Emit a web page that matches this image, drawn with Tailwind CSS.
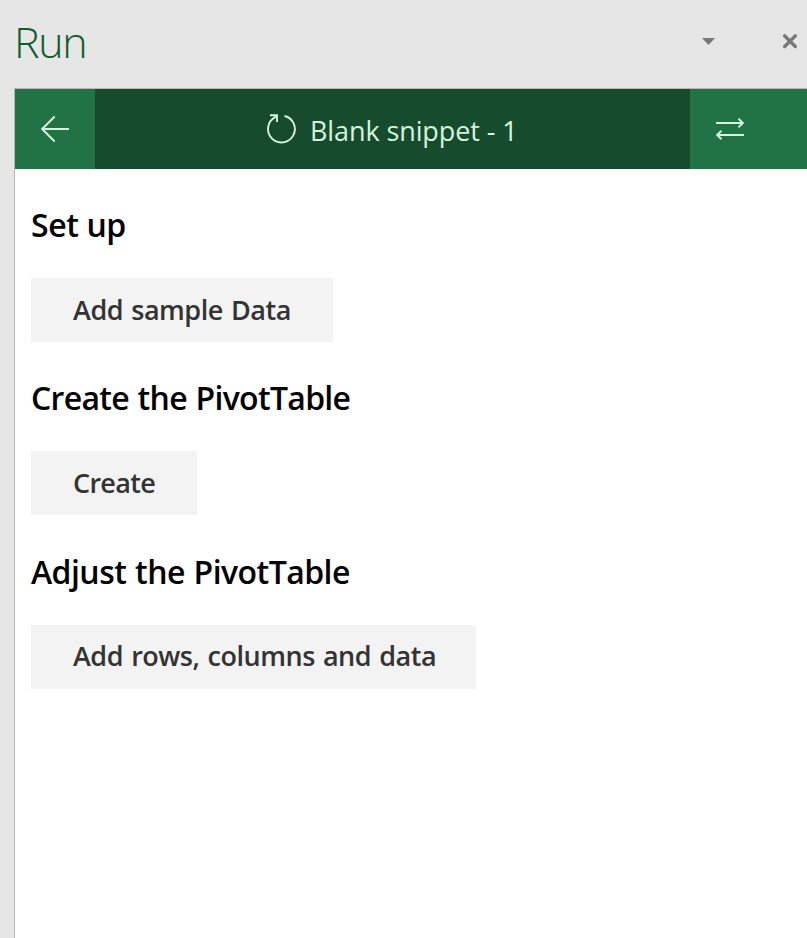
<!DOCTYPE html>
<html lang="en">
<head>
<meta charset="utf-8">
<title>Run</title>
<script src="https://cdn.jsdelivr.net/npm/@tailwindcss/browser@4"></script>
</head>
<body class="h-[938px] w-[807px] overflow-hidden bg-[#e6e6e6] font-['Open_Sans','Noto_Sans',sans-serif]">
<div class="flex h-full flex-col">
  <header class="flex h-[88px] shrink-0 items-start justify-between pl-[14px]">
    <h1 class="pt-[12px] text-[43px] leading-[60px] font-light tracking-[-1.3px] text-[#0e5c2f]">Run</h1>
    <div class="flex pt-[34px] pr-[10px]">
      <svg class="mr-[68px] h-[15px] w-[13px]" viewBox="0 0 13 15" fill="#777"><path d="M0 4H13L6.500 11Z"/></svg>
      <svg class="h-[15px] w-[14px]" viewBox="0 0 14 15" fill="none" stroke="#777" stroke-width="3.400" stroke-linecap="round"><path d="M1.700 1.900L12.300 12.500M12.300 1.900L1.700 12.500"/></svg>
    </div>
  </header>
  <main class="ml-[14px] flex-1 border-t border-l border-[#b7b7b7] bg-white">
    <nav class="flex h-20 bg-[#217346] text-[#d3f5df]">
      <button class="flex w-20 items-center justify-center">
        <svg class="h-7 w-7" viewBox="0 0 28 28" fill="none" stroke="currentColor" stroke-width="1.900"><path d="M28 14H1M13.700 1.500L1.200 14L13.700 26.500"/></svg>
      </button>
      <div class="flex w-[595px] bg-[#174b2d] pl-[170px]">
        <svg class="mt-[24px] h-[32px] w-[32px]" viewBox="0 0 32 32" fill="none" stroke="currentColor" stroke-width="1.900"><path d="M19.500 3A13.400 13.400 0 1 1 10.200 4.200L12 3M5 2.200H12V9"/></svg>
        <span class="ml-[13px] pt-[24px] text-[27px] leading-[36px] tracking-[-0.1px] whitespace-nowrap">Blank snippet - 1</span>
      </div>
      <button class="flex w-20 items-center justify-center">
        <svg class="h-[24px] w-[28px]" viewBox="0 0 28 24" fill="none" stroke="currentColor" stroke-width="1.900"><path d="M0 6H27M22.500 1.700L27 6L22.500 10.300M28 18H1M5.500 13.700L1 18L5.500 22.300"/></svg>
      </button>
    </nav>
    <div class="flex flex-col items-start pl-4 whitespace-nowrap">
      <h2 class="mt-[34px] h-[44px] text-[32px] leading-[44px] font-semibold tracking-[-0.4px] text-black">Set up</h2>
      <button class="mt-[31px] h-16 w-[302px] bg-[#f3f3f3] pt-px pl-[42px] text-left text-[27px] font-semibold tracking-[-0.47px] [word-spacing:1.600px] text-[#333]">Add sample Data</button>
      <h2 class="mt-[34px] h-[44px] text-[32px] leading-[44px] font-semibold tracking-[-0.7px] [word-spacing:1px] text-black">Create the PivotTable</h2>
      <button class="mt-[31px] h-16 w-[166px] bg-[#f3f3f3] pt-px pl-[42px] text-left text-[27px] font-semibold tracking-[-0.7px] text-[#333]">Create</button>
      <h2 class="mt-[35px] h-[44px] text-[32px] leading-[44px] font-semibold tracking-[-0.55px] [word-spacing:1px] text-black">Adjust the PivotTable</h2>
      <button class="mt-[31px] h-16 w-[445px] bg-[#f3f3f3] pb-[2px] pl-[42px] text-left text-[27px] font-semibold tracking-[-0.48px] [word-spacing:1.600px] text-[#333]">Add rows, columns and data</button>
    </div>
  </main>
</div>
</body>
</html>
